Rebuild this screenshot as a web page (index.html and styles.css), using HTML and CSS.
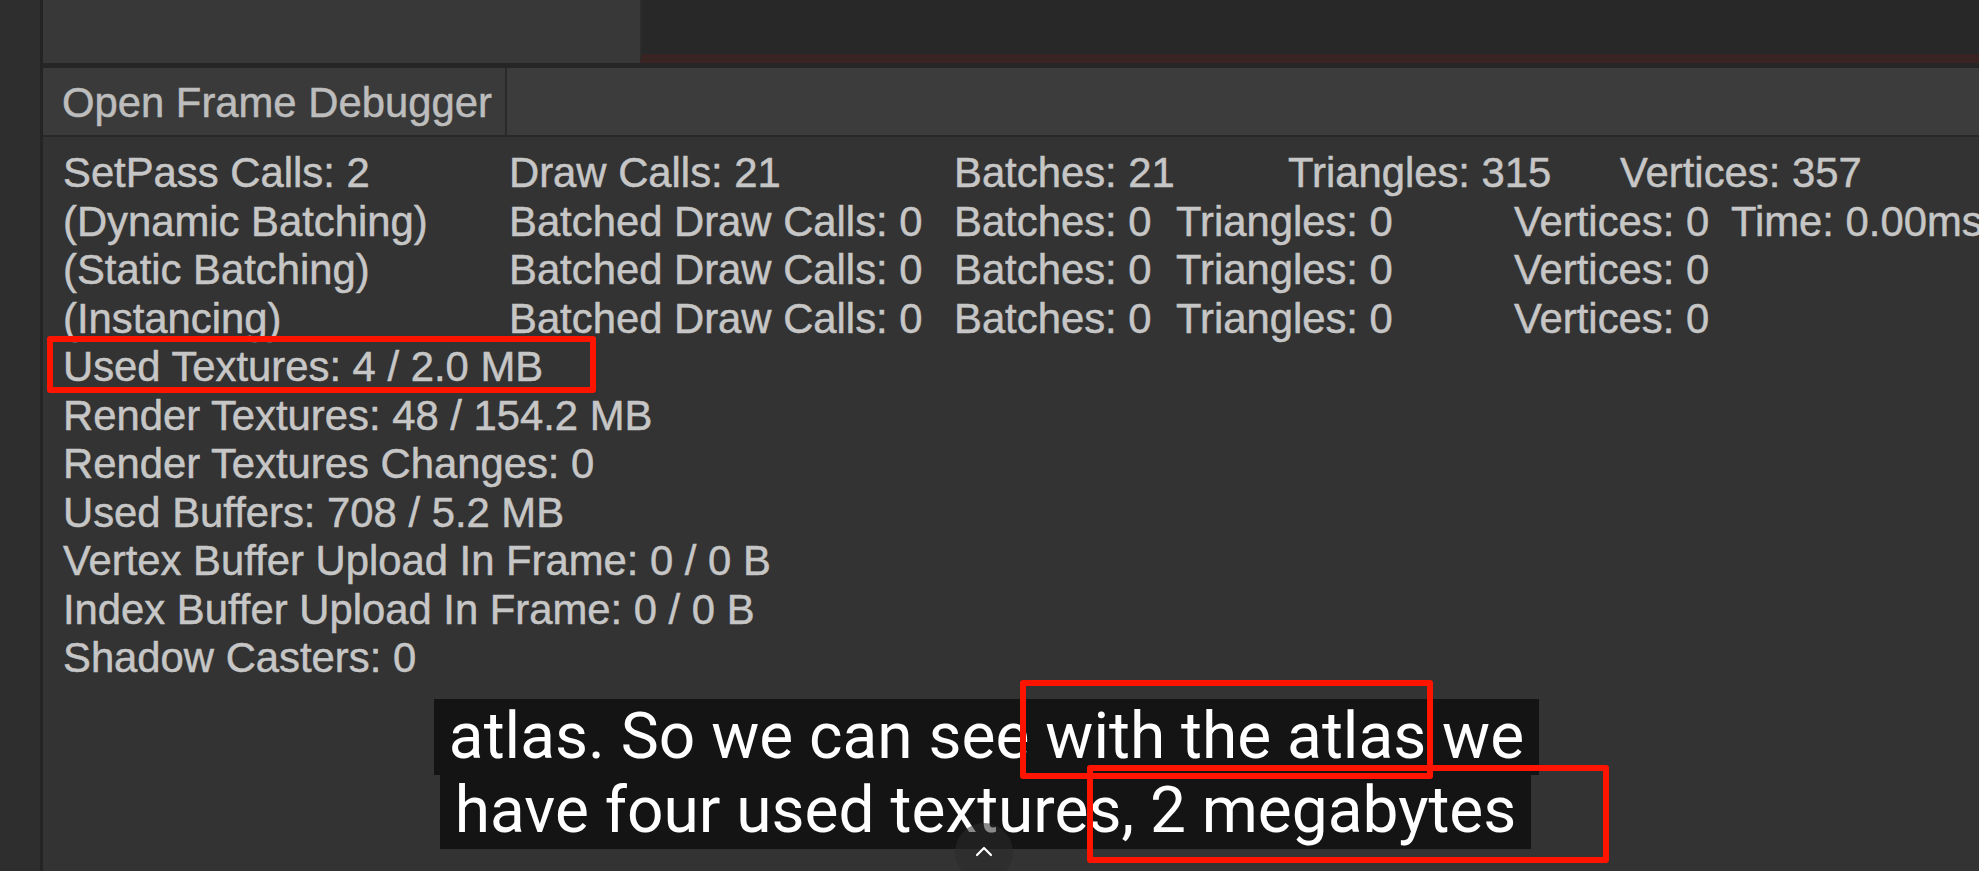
FILE: index.html
```html
<!DOCTYPE html>
<html lang="en">
<head>
<meta charset="utf-8">
<title>Frame Stats</title>
<link rel="stylesheet" href="styles.css">
</head>
<body>
<div class="screen">
  <aside class="gutter"></aside>
  <main class="panel">
    <div class="topbar">
      <div class="topbox"></div>
      <div class="viewport"></div>
    </div>
    <div class="toolbar">
      <div class="tab">Open Frame Debugger</div>
    </div>
    <section class="stats">
      <div class="row row-main">
        <span>SetPass Calls: 2</span><span>Draw Calls: 21</span><span>Batches: 21</span><span>Triangles: 315</span><span>Vertices: 357</span>
      </div>
      <div class="row row-batch">
        <span>(Dynamic Batching)</span><span>Batched Draw Calls: 0</span><span>Batches: 0</span><span>Triangles: 0</span><span>Vertices: 0</span><span>Time: 0.00ms</span>
      </div>
      <div class="row row-batch">
        <span>(Static Batching)</span><span>Batched Draw Calls: 0</span><span>Batches: 0</span><span>Triangles: 0</span><span>Vertices: 0</span>
      </div>
      <div class="row row-batch">
        <span>(Instancing)</span><span>Batched Draw Calls: 0</span><span>Batches: 0</span><span>Triangles: 0</span><span>Vertices: 0</span>
      </div>
      <div class="row">Used Textures: 4 / 2.0 MB</div>
      <div class="row">Render Textures: 48 / 154.2 MB</div>
      <div class="row">Render Textures Changes: 0</div>
      <div class="row">Used Buffers: 708 / 5.2 MB</div>
      <div class="row">Vertex Buffer Upload In Frame: 0 / 0 B</div>
      <div class="row">Index Buffer Upload In Frame: 0 / 0 B</div>
      <div class="row">Shadow Casters: 0</div>
    </section>
  </main>

  <div class="mark mark-textures"></div>

  <div class="captions">
    <span class="cap-line">atlas. So we can see with the atlas we</span>
    <span class="cap-line">have four used textures, 2 megabytes</span>
  </div>

  <div class="mark mark-atlas"></div>
  <div class="mark mark-mb"></div>

  <div class="expand">
    <svg width="18" height="12" viewBox="0 0 18 12"><polyline points="2,10 9,3 16,10" fill="none" stroke="#ffffff" stroke-width="2.2" stroke-linecap="round" stroke-linejoin="round"/></svg>
  </div>
</div>
</body>
</html>
```

FILE: styles.css
```css
html, body {
  margin: 0;
  padding: 0;
  background: #333333;
}

.screen {
  position: relative;
  width: 1979px;
  height: 871px;
  overflow: hidden;
  display: flex;
  background: #333333;
  font-family: "Liberation Sans", Arial, sans-serif;
}

.gutter {
  width: 40px;
  flex: 0 0 40px;
  background: #2e2e2e;
  border-right: 3px solid #242424;
}

.panel {
  flex: 1;
  min-width: 0;
  display: flex;
  flex-direction: column;
  background: #333333;
}

.topbar {
  display: flex;
  height: 63px;
  border-bottom: 5px solid #262626;
}

.topbox {
  width: 597px;
  background: #383838;
}

.viewport {
  flex: 1;
  background: #282828;
  box-sizing: border-box;
  border-bottom: 9px solid #3a2323;
  border-left: 2px solid #2c2c2c;
}

.toolbar {
  display: flex;
  height: 67px;
  background: #3c3c3c;
  border-bottom: 2px solid #282828;
}

.tab {
  width: 443px;
  padding-left: 19px;
  padding-top: 2px;
  box-sizing: content-box;
  background: #3a3a3a;
  border-right: 2px solid #2a2a2a;
  color: #bdbdbd;
  font-size: 41.8px;
  line-height: 65px;
  white-space: nowrap;
  -webkit-text-stroke: 0.5px #bdbdbd;
}

.stats {
  padding: 12px 0 0 20px;
  color: #c6c6c6;
  font-size: 41.8px;
  line-height: 48.5px;
  white-space: nowrap;
  -webkit-text-stroke: 0.5px #c6c6c6;
}

.row {
  height: 48.5px;
}

.row-main {
  display: grid;
  grid-template-columns: 446px 445px 334px 332px auto;
}

.row-batch {
  display: grid;
  grid-template-columns: 446px 445px 222px 338px 217px auto;
}

.mark {
  position: absolute;
  box-sizing: border-box;
  border: 6px solid #ff1400;
  border-radius: 3px;
  z-index: 3;
}

.mark-textures {
  left: 47px;
  top: 336px;
  width: 549px;
  height: 57px;
}

.mark-atlas {
  left: 1020px;
  top: 680px;
  width: 413px;
  height: 99px;
}

.mark-mb {
  left: 1087px;
  top: 765px;
  width: 522px;
  height: 98px;
}

.captions {
  position: absolute;
  left: 0;
  right: 0;
  top: 699px;
  display: flex;
  flex-direction: column;
  align-items: center;
  z-index: 2;
  font-family: Roboto, "Liberation Sans", sans-serif;
  font-size: 64px;
  line-height: 76px;
  color: #ffffff;
}

.cap-line {
  display: block;
  background: #141414;
  padding: 0 15px;
  height: 76px;
  white-space: nowrap;
  margin-left: -6px;
}

.cap-line + .cap-line {
  height: 74px;
  line-height: 72px;
  margin-left: -8px;
}

.expand {
  position: absolute;
  left: 955px;
  top: 823px;
  width: 58px;
  height: 58px;
  border-radius: 50%;
  background: rgba(42, 42, 42, 0.55);
  display: flex;
  align-items: flex-start;
  justify-content: center;
  padding-top: 22px;
  box-sizing: border-box;
  z-index: 4;
}
```
